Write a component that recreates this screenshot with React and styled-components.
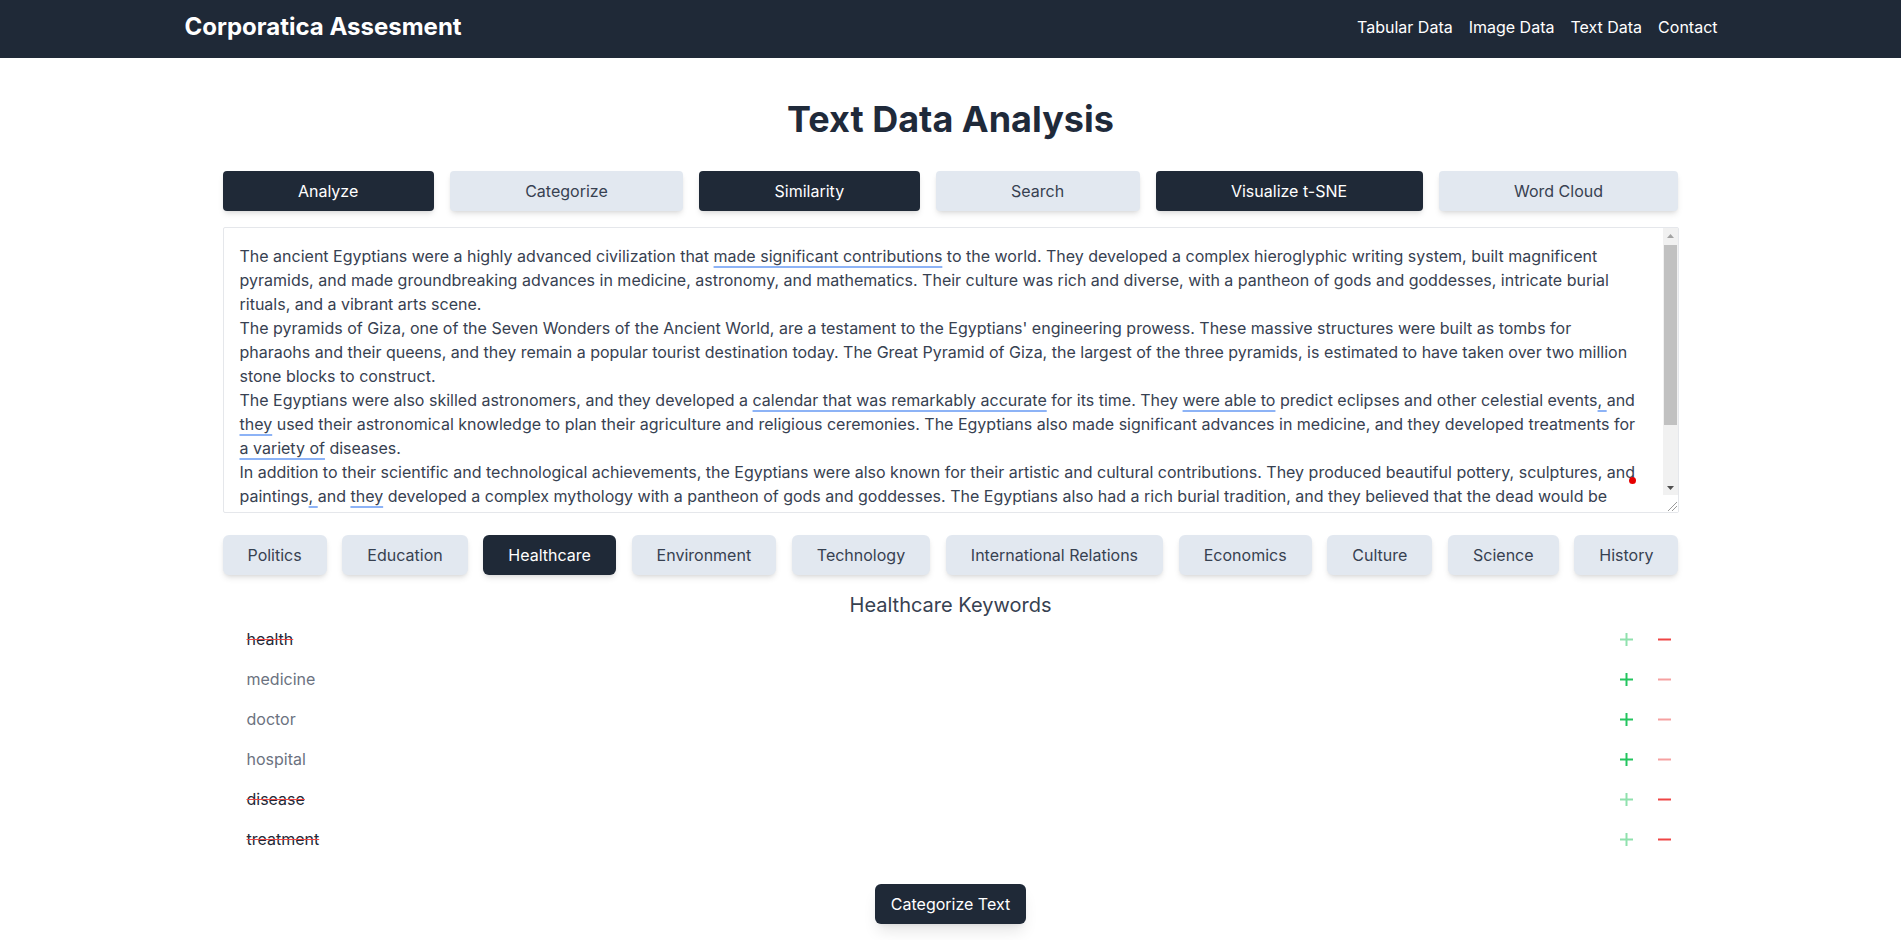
import React, { useState } from "react";
import styled, { createGlobalStyle } from "styled-components";

const GlobalStyle = createGlobalStyle`
  html, body { margin: 0; padding: 0; background: #ffffff; }
  body { font-family: Inter, "Noto Sans", "Liberation Sans", sans-serif; color: #1f2937; }
  * { box-sizing: border-box; }
`;

const Nav = styled.header`
  background: #1f2937;
  height: 58px;
`;

const NavInner = styled.div`
  max-width: 1536px;
  height: 100%;
  margin: 0 auto;
  padding: 0 1px 4px 2px;
  display: flex;
  align-items: center;
  justify-content: space-between;
`;

const Brand = styled.div`
  color: #ffffff;
  font-size: 24px;
  line-height: 32px;
  font-weight: 700;
`;

const NavLinks = styled.nav`
  display: flex;
  gap: 16px;
`;

const NavLink = styled.a`
  color: #ffffff;
  font-size: 16px;
  line-height: 24px;
  text-decoration: none;
`;

const Main = styled.main`
  max-width: 1536px;
  margin: 0 auto;
  padding: 41px 40px 16px;
`;

const Title = styled.h1`
  margin: 0 0 32px;
  text-align: center;
  font-size: 36px;
  line-height: 40px;
  font-weight: 700;
  color: #1f2a3a;
`;

const ActionRow = styled.div`
  display: flex;
  gap: 16px;
`;

const ActionButton = styled.button`
  flex: 1 1 auto;
  height: 40px;
  padding: 8px 16px;
  border: none;
  border-radius: 4px;
  font-family: inherit;
  font-size: 16px;
  line-height: 24px;
  cursor: pointer;
  background: ${(p) => (p.$dark ? "#1f2937" : "#e2e8f0")};
  color: ${(p) => (p.$dark ? "#ffffff" : "#374151")};
  box-shadow: 0 4px 6px -1px rgba(0, 0, 0, 0.1), 0 2px 4px -2px rgba(0, 0, 0, 0.1);
`;

const EditorFrame = styled.div`
  position: relative;
  margin-top: 16px;
  height: 286px;
  display: flex;
  border: 1px solid #e5e7eb;
  border-radius: 2px;
  background: #ffffff;
`;

const TextPane = styled.div`
  flex: 1 1 auto;
  min-width: 0;
  padding: 16px 22px 16px 16px;
  overflow-y: auto;
  scrollbar-width: none;
  font-size: 16px;
  line-height: 24px;
  color: #374151;
  white-space: pre-wrap;
  &::-webkit-scrollbar { display: none; }
`;

const ScrollTrack = styled.div`
  flex: 0 0 15px;
  display: flex;
  flex-direction: column;
  background: #f1f1f1;
`;

const ScrollArrow = styled.div`
  height: 15px;
  flex: 0 0 15px;
  display: flex;
  align-items: center;
  justify-content: center;
  color: ${(p) => (p.$disabled ? "#a3a3a3" : "#505050")};
`;

const ScrollThumb = styled.div`
  margin: 2px 1px 0;
  height: 180px;
  flex: 0 0 180px;
  background: #c1c1c1;
`;

const ScrollSpacer = styled.div`
  flex: 1 1 auto;
`;

const Resizer = styled.div`
  height: 17px;
  flex: 0 0 17px;
  background: #ffffff;
  display: flex;
  align-items: flex-end;
  justify-content: flex-end;
`;

const Mark = styled.span`
  text-decoration: underline;
  text-decoration-color: #8db3f6;
  text-decoration-thickness: 2px;
  text-underline-offset: 4px;
  text-decoration-skip-ink: none;
`;

const Dot = styled.span`
  position: absolute;
  left: 1405px;
  top: 249px;
  width: 7px;
  height: 7px;
  border-radius: 50%;
  background: #e60000;
`;

const CategoryRow = styled.div`
  margin-top: 22px;
  display: flex;
  justify-content: space-between;
`;

const CategoryButton = styled.button`
  height: 40px;
  padding: 8px 25px;
  border: none;
  border-radius: 6px;
  font-family: inherit;
  font-size: 16px;
  line-height: 24px;
  cursor: pointer;
  background: ${(p) => (p.$active ? "#1f2937" : "#e2e8f0")};
  color: ${(p) => (p.$active ? "#ffffff" : "#374151")};
  box-shadow: 0 4px 6px -1px rgba(0, 0, 0, 0.1), 0 2px 4px -2px rgba(0, 0, 0, 0.1);
`;

const KeywordTitle = styled.h2`
  margin: 16px 0 0;
  text-align: center;
  font-size: 20px;
  line-height: 28px;
  font-weight: 400;
  color: #374151;
`;

const KeywordList = styled.ul`
  list-style: none;
  margin: 0;
  padding: 0;
`;

const KeywordRow = styled.li`
  height: 40px;
  padding: 8px 8px 8px 24px;
  display: flex;
  align-items: center;
  justify-content: space-between;
`;

const KeywordText = styled.span`
  font-size: 16px;
  line-height: 24px;
  color: ${(p) => (p.$removed ? "#1f2937" : "#6b7280")};
  text-decoration: ${(p) => (p.$removed ? "line-through" : "none")};
  text-decoration-color: #ef4444;
`;

const Actions = styled.div`
  display: flex;
  align-items: center;
  gap: 25px;
`;

const IconButton = styled.button`
  display: flex;
  padding: 0;
  border: none;
  background: none;
  cursor: pointer;
  color: ${(p) => p.$color};
  opacity: ${(p) => (p.$dim ? 0.5 : 1)};
`;

const Footer = styled.div`
  margin-top: 25px;
  display: flex;
  justify-content: center;
`;

const SubmitButton = styled.button`
  height: 40px;
  padding: 8px 16px;
  border: none;
  border-radius: 6px;
  background: #1f2937;
  color: #ffffff;
  font-family: inherit;
  font-size: 16px;
  line-height: 24px;
  cursor: pointer;
  box-shadow: 0 10px 15px -3px rgba(0, 0, 0, 0.1), 0 4px 6px -4px rgba(0, 0, 0, 0.1);
`;

const PlusIcon = () => (
  <svg width="13" height="13" viewBox="0 0 13 13" fill="none" stroke="currentColor" strokeWidth="2">
    <line x1="6.5" y1="0" x2="6.5" y2="13" />
    <line x1="0" y1="6.5" x2="13" y2="6.5" />
  </svg>
);

const MinusIcon = () => (
  <svg width="13" height="13" viewBox="0 0 13 13" fill="none" stroke="currentColor" strokeWidth="2">
    <line x1="0" y1="6.5" x2="13" y2="6.5" />
  </svg>
);

const ArrowUp = () => (
  <svg width="7" height="4" viewBox="0 0 7 4" fill="currentColor">
    <polygon points="3.5,0 7,4 0,4" />
  </svg>
);

const ArrowDown = () => (
  <svg width="7" height="4" viewBox="0 0 7 4" fill="currentColor">
    <polygon points="0,0 7,0 3.5,4" />
  </svg>
);

const ResizeGrip = () => (
  <svg width="12" height="12" viewBox="0 0 12 12" fill="none" stroke="#9a9a9a" strokeWidth="1">
    <line x1="2" y1="11" x2="11" y2="2" />
    <line x1="6" y1="11" x2="11" y2="6" />
  </svg>
);

const actions = [
  { label: "Analyze", dark: true },
  { label: "Categorize" },
  { label: "Similarity", dark: true },
  { label: "Search" },
  { label: "Visualize t-SNE", dark: true },
  { label: "Word Cloud" },
];

const categories = [
  "Politics",
  "Education",
  "Healthcare",
  "Environment",
  "Technology",
  "International Relations",
  "Economics",
  "Culture",
  "Science",
  "History",
];

const initialKeywords = [
  { word: "health", removed: true },
  { word: "medicine", removed: false },
  { word: "doctor", removed: false },
  { word: "hospital", removed: false },
  { word: "disease", removed: true },
  { word: "treatment", removed: true },
];

export default function App() {
  const [active, setActive] = useState("Healthcare");
  const [keywords, setKeywords] = useState(initialKeywords);

  const setRemoved = (word, removed) =>
    setKeywords((list) => list.map((k) => (k.word === word ? { ...k, removed } : k)));

  return (
    <>
      <GlobalStyle />
      <Nav>
        <NavInner>
          <Brand>Corporatica Assesment</Brand>
          <NavLinks>
            <NavLink href="#">Tabular Data</NavLink>
            <NavLink href="#">Image Data</NavLink>
            <NavLink href="#">Text Data</NavLink>
            <NavLink href="#">Contact</NavLink>
          </NavLinks>
        </NavInner>
      </Nav>
      <Main>
        <Title>Text Data Analysis</Title>
        <ActionRow>
          {actions.map((a) => (
            <ActionButton key={a.label} $dark={a.dark}>
              {a.label}
            </ActionButton>
          ))}
        </ActionRow>
        <EditorFrame>
          <TextPane>
            The ancient Egyptians were a highly advanced civilization that{" "}
            <Mark>made significant contributions</Mark> to the world. They developed a complex
            hieroglyphic writing system, built magnificent pyramids, and made groundbreaking
            advances in medicine, astronomy, and mathematics. Their culture was rich and diverse,
            with a pantheon of gods and goddesses, intricate burial rituals, and a vibrant arts
            scene.{"\n"}The pyramids of Giza, one of the Seven Wonders of the Ancient World, are a
            testament to the Egyptians' engineering prowess. These massive structures were built as
            tombs for pharaohs and their queens, and they remain a popular tourist destination
            today. The Great Pyramid of Giza, the largest of the three pyramids, is estimated to
            have taken over two million stone blocks to construct.{"\n"}The Egyptians were also
            skilled astronomers, and they developed a <Mark>calendar that was remarkably accurate</Mark>{" "}
            for its time. They <Mark>were able to</Mark> predict eclipses and other celestial events
            <Mark>, </Mark>and <Mark>they</Mark> used their astronomical knowledge to plan their
            agriculture and religious ceremonies. The Egyptians also made significant advances in
            medicine, and they developed treatments for <Mark>a variety of</Mark> diseases.{"\n"}In
            addition to their scientific and technological achievements, the Egyptians were also
            known for their artistic and cultural contributions. They produced beautiful pottery,
            sculptures, and paintings<Mark>, </Mark>and <Mark>they</Mark> developed a complex
            mythology with a pantheon of gods and goddesses. The Egyptians also had a rich burial
            tradition, and they believed that the dead would be reborn in the afterlife. They
            filled their tombs with food, furniture, jewelry and other treasures to accompany the
            deceased on their journey.{"\n"}Today, the legacy of ancient Egypt continues to
            fascinate people around the world, and its monuments and artifacts are studied by
            archaeologists and historians alike.
          </TextPane>
          <ScrollTrack>
            <ScrollArrow $disabled>
              <ArrowUp />
            </ScrollArrow>
            <ScrollThumb />
            <ScrollSpacer />
            <ScrollArrow>
              <ArrowDown />
            </ScrollArrow>
            <Resizer>
              <ResizeGrip />
            </Resizer>
          </ScrollTrack>
          <Dot />
        </EditorFrame>
        <CategoryRow>
          {categories.map((c) => (
            <CategoryButton key={c} $active={c === active} onClick={() => setActive(c)}>
              {c}
            </CategoryButton>
          ))}
        </CategoryRow>
        <KeywordTitle>{active} Keywords</KeywordTitle>
        <KeywordList>
          {keywords.map((k) => (
            <KeywordRow key={k.word}>
              <KeywordText $removed={k.removed}>{k.word}</KeywordText>
              <Actions>
                <IconButton
                  aria-label={`Keep ${k.word}`}
                  $color="#22c55e"
                  $dim={k.removed}
                  onClick={() => setRemoved(k.word, false)}
                >
                  <PlusIcon />
                </IconButton>
                <IconButton
                  aria-label={`Remove ${k.word}`}
                  $color="#ef4444"
                  $dim={!k.removed}
                  onClick={() => setRemoved(k.word, true)}
                >
                  <MinusIcon />
                </IconButton>
              </Actions>
            </KeywordRow>
          ))}
        </KeywordList>
        <Footer>
          <SubmitButton>Categorize Text</SubmitButton>
        </Footer>
      </Main>
    </>
  );
}
